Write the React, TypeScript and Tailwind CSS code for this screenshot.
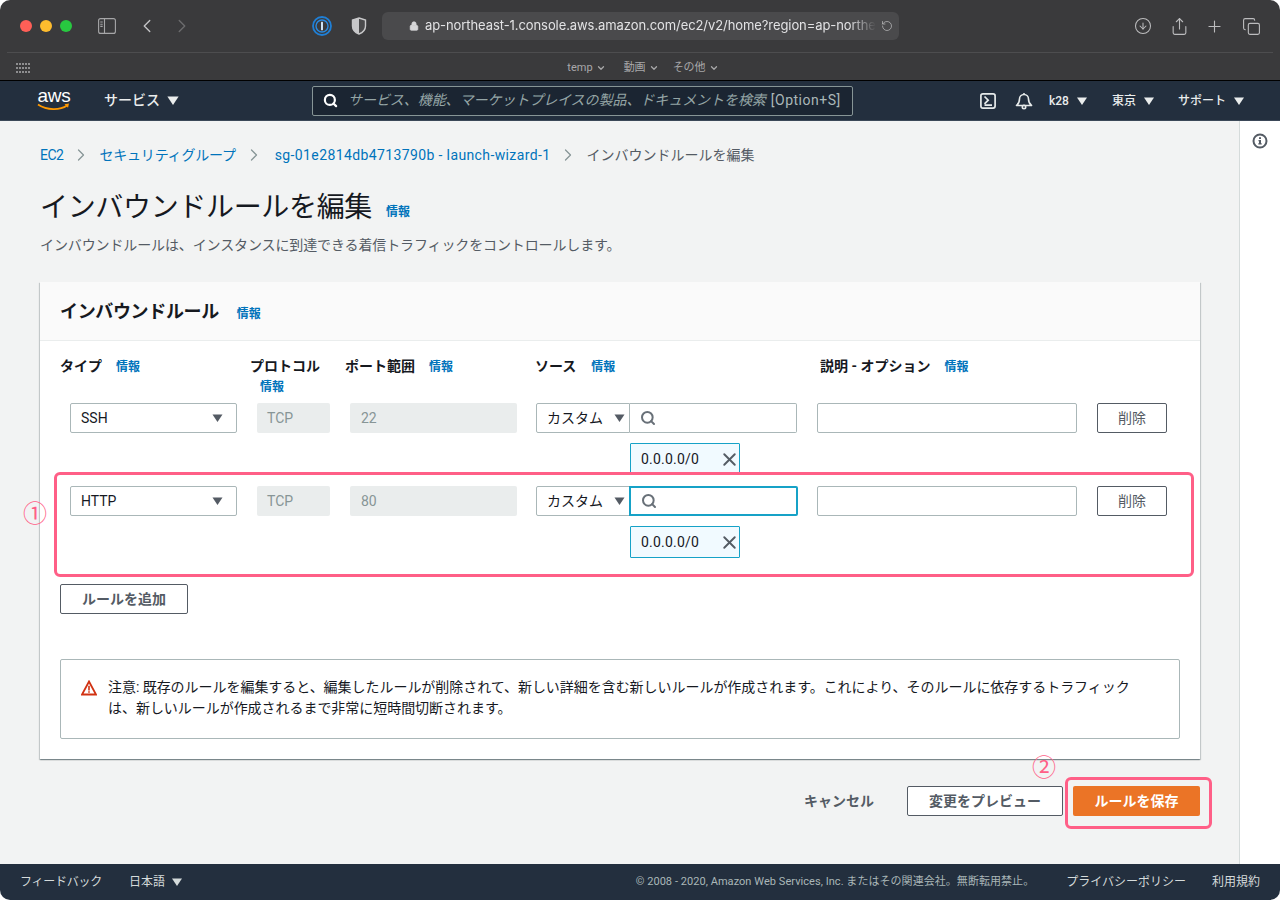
import React from 'react';
import { ArrowDownCircle, ChevronLeft, ChevronRight, ChevronDown, Copy, Lock, Plus, RotateCw, Search, Share, X } from 'lucide-react';

const jp = 'font-[Roboto,"Noto_Sans_CJK_JP",sans-serif]';

const Caret = ({ className = '' }: { className?: string }) => (
  <svg viewBox="0 0 10 8" className={`w-[10px] h-[8px] ${className}`} fill="currentColor">
    <path d="M0 0.5h10L5 8z" />
  </svg>
);

const InfoLink = ({ className = '' }: { className?: string }) => (
  <a className={`text-[12px] font-bold text-[#0073bb] leading-[18px] ${className}`}>情報</a>
);

const ThLabel = ({ children }: { children: React.ReactNode }) => (
  <span className="text-[14px] font-bold text-[#16191f] leading-[20px] whitespace-nowrap">{children}</span>
);

const Crumb = ({ children, className = '' }: { children: React.ReactNode; className?: string }) => (
  <a className={`text-[14px] text-[#0073bb] whitespace-nowrap ${className}`}>{children}</a>
);

const CrumbSep = () => <ChevronRight className="w-[20px] h-[20px] mx-[8px] text-[#879596]" strokeWidth={1.5} />;

const Rule = ({ type, port, focused }: { type: string; port: string; focused?: boolean }) => (
  <div className="flex items-start pl-[30px]">
    <div className="w-[167px] h-[30px] bg-white border border-[#aab7b8] rounded-[2px] flex items-center justify-between pl-[10px] pr-[13px]">
      <span className="text-[14px] text-[#16191f]">{type}</span>
      <Caret className="text-[#545b64] w-[11px]" />
    </div>
    <div className="w-[73px] h-[30px] ml-[20px] bg-[#eaeded] rounded-[2px] flex items-center pl-[10px] text-[14px] text-[#879596]">TCP</div>
    <div className="w-[167px] h-[30px] ml-[20px] bg-[#eaeded] rounded-[2px] flex items-center pl-[11px] text-[14px] text-[#879596]">{port}</div>
    <div className="w-[261px] ml-[19px]">
      <div className="flex h-[30px]">
        <div className="w-[94px] bg-white border border-[#aab7b8] rounded-l-[2px] flex items-center justify-between pl-[10px] pr-[4px]">
          <span className="text-[14px] text-[#16191f] whitespace-nowrap">カスタム</span>
          <Caret className="text-[#545b64] w-[11px]" />
        </div>
        <div className={`flex-1 bg-white rounded-r-[2px] flex items-center pl-[10px] ${focused ? 'border-2 border-[#16a2c7] -ml-px -mr-px' : 'border border-l-0 border-[#aab7b8]'}`}>
          <Search className="w-[16px] h-[16px] text-[#687078]" strokeWidth={3} />
        </div>
      </div>
      <div className="ml-[94px] mt-[10px] w-[110px] h-[32px] border border-[#16a2c7] rounded-[1px] bg-[#f1faff] flex items-center justify-between pl-[10px]">
        <span className="text-[14px] text-[#16191f] tracking-[0.2px]">0.0.0.0/0</span>
        <X className="w-[21px] h-[21px] text-[#545b64] -mr-[1px]" strokeWidth={2.2} />
      </div>
    </div>
    <div className="w-[260px] h-[30px] ml-[20px] bg-white border border-[#aab7b8] rounded-[2px]" />
    <button className="w-[70px] h-[30px] ml-[20px] bg-white border border-[#545b64] rounded-[2px] text-[14px] text-[#545b64]">削除</button>
  </div>
);

const App: React.FC = () => {
  return (
    <div className={`relative w-[1280px] h-[900px] overflow-hidden bg-white flex flex-col ${jp}`}>
      {/* Safari toolbar */}
      <div className="h-[81px] shrink-0 rounded-t-[10px] bg-[#3a3a3c] border-b border-black flex flex-col">
        <div className="h-[53px] mx-[7px] border-b border-[#4d4d4f] flex items-center pl-[13px] pr-[9px]">
          <span className="w-[12px] h-[12px] rounded-full bg-[#ff5f57]" />
          <span className="w-[12px] h-[12px] rounded-full bg-[#febc2e] ml-[8px]" />
          <span className="w-[12px] h-[12px] rounded-full bg-[#28c840] ml-[8px]" />
          <svg viewBox="0 0 18 16" className="w-[18px] h-[16px] ml-[26px] text-[#a6a6a8]" fill="none" stroke="currentColor" strokeWidth="1.1">
            <rect x="0.6" y="0.6" width="16.8" height="14.8" rx="2" />
            <path d="M6.5 0.6v14.8M2.3 4h2.4M2.3 6.2h2.4M2.3 8.4h2.4" />
          </svg>
          <ChevronLeft className="w-[22px] h-[22px] ml-[20px] text-[#c4c4c6]" strokeWidth={1.5} />
          <ChevronRight className="w-[22px] h-[22px] ml-[13px] text-[#6c6c6e]" strokeWidth={1.5} />
          <svg viewBox="0 0 20 20" className="w-[20px] h-[20px] ml-[119px]" fill="none">
            <circle cx="10" cy="10" r="9" stroke="#1f7fd6" strokeWidth="1.800" />
            <circle cx="10" cy="10" r="6" stroke="#2a8ae0" strokeWidth="1.400" />
            <rect x="9" y="5.800" width="2" height="8.400" rx="0.500" fill="#cfe3f5" />
          </svg>
          <svg viewBox="0 0 16 18" className="w-[16px] h-[18px] ml-[19px]">
            <path d="M8 1l6.500 2v6c0 4-3 6.700-6.500 8-3.500-1.300-6.500-4-6.500-8V3z" fill="#4a4a4c" stroke="#c8c8ca" strokeWidth="1.400" />
            <path d="M8 1l-6.500 2v6c0 4 3 6.700 6.500 8z" fill="#c8c8ca" />
          </svg>
          <div className="w-[517px] h-[28px] ml-[15px] rounded-[6px] bg-[#4a4a4c] flex items-center pl-[27px] pr-[6px] font-[Inter,sans-serif]">
            <Lock className="w-[10px] h-[10px] text-[#d6d6d8] fill-[#d6d6d8] shrink-0" strokeWidth={2} />
            <span className="ml-[6px] text-[13px] text-[#e2e2e4] whitespace-nowrap tracking-[-0.08px] [mask-image:linear-gradient(to_right,black_94%,transparent)]">ap-northeast-1.console.aws.amazon.com/ec2/v2/home?region=ap-northe</span>
            <RotateCw className="w-[12px] h-[12px] text-[#b8b8ba] ml-auto -scale-x-100" strokeWidth={1.5} />
          </div>
          <ArrowDownCircle className="w-[18px] h-[18px] ml-[235px] text-[#bcbcbe]" strokeWidth={1.4} />
          <Share className="w-[19px] h-[21px] ml-[18px] text-[#bcbcbe]" strokeWidth={1.4} />
          <Plus className="w-[19px] h-[19px] ml-[16px] text-[#bcbcbe]" strokeWidth={1.4} />
          <Copy className="w-[19px] h-[19px] ml-[18px] text-[#bcbcbe]" strokeWidth={1.4} />
        </div>
        <div className="flex-1 relative flex items-center justify-center text-[11px] text-[#a8a8aa] pt-[3px] pl-[6px]">
          <svg viewBox="0 0 14 10" className="absolute left-[16px] top-[10px] w-[14px] h-[10px] text-[#8e8e90]" fill="currentColor">
            <path d="M0 0h2v2H0zM3 0h2v2H3zM6 0h2v2H6zM9 0h2v2H9zM12 0h2v2h-2zM0 4h2v2H0zM3 4h2v2H3zM6 4h2v2H6zM9 4h2v2H9zM12 4h2v2h-2zM0 8h2v2H0zM3 8h2v2H3zM6 8h2v2H6zM9 8h2v2H9zM12 8h2v2h-2z" />
          </svg>
          <span className="flex items-center gap-[3px]">temp <ChevronDown className="w-[10px] h-[10px]" strokeWidth={3} /></span>
          <span className="flex items-center gap-[3px] ml-[18px]">動画 <ChevronDown className="w-[10px] h-[10px]" strokeWidth={3} /></span>
          <span className="flex items-center gap-[3px] ml-[14px]">その他 <ChevronDown className="w-[10px] h-[10px]" strokeWidth={3} /></span>
        </div>
      </div>

      {/* AWS nav */}
      <div className="h-[40px] shrink-0 bg-[#232f3e] flex items-center text-white border-b border-[#3b4858]">
        <div className="ml-[37px] w-[34px] h-[30px] relative flex flex-col items-center">
          <span className="text-[19px] leading-[17px] font-[Liberation_Sans,sans-serif] mt-[1px] tracking-[-0.2px]">aws</span>
          <svg viewBox="0 0 34 9" className="w-[34px] h-[9px] -mt-[1px]">
            <path d="M1 1.500c9 6 22 6 29 1" fill="none" stroke="#f90" strokeWidth="1.800" />
            <path d="M27.500 1.200l4.500-.6-1 4.200z" fill="#f90" />
          </svg>
        </div>
        <span className="ml-[33px] text-[14px] font-medium text-[#eaeded]">サービス</span>
        <Caret className="ml-[7px] w-[12px] h-[9px] text-[#eaeded]" />
        <div className="ml-[133px] w-[541px] h-[30px] border border-[#879596] rounded-[2px] bg-[#1b2532] flex items-center pl-[10px] whitespace-nowrap">
          <Search className="w-[15px] h-[15px] text-white" strokeWidth={3.5} />
          <span className="ml-[10px] text-[14px] italic text-[#95a5a6] tracking-[-0.06px]">サービス、機能、マーケットプレイスの製品、ドキュメントを検索</span>
          <span className="ml-[5px] text-[14px] text-[#aab7b8] tracking-[0.5px]">[Option+S]</span>
        </div>
        <svg viewBox="0 0 16 16" className="ml-[127px] w-[16px] h-[16px]" fill="none" stroke="#e6eaea" strokeWidth="1.700">
          <rect x="0.900" y="0.900" width="14.200" height="14.200" rx="2" />
          <path d="M4.500 3.500l3.700 3.700-3.700 3.700M4.500 12.200h7.500" />
        </svg>
        <svg viewBox="0 0 18 18" className="ml-[19px] w-[18px] h-[18px]" fill="none" stroke="#e6eaea" strokeWidth="1.600">
          <path d="M1.500 13.500c2-1.500 3-3.500 3-6.500a4.500 4.500 0 019 0c0 3 1 5 3 6.500zM9 1v1.500" strokeLinejoin="round" />
          <circle cx="9" cy="15" r="1.700" />
        </svg>
        <span className="ml-[16px] text-[12px] font-medium text-[#eaeded]">k28</span>
        <Caret className="ml-[8px] w-[10px] h-[8px] text-[#eaeded]" />
        <span className="ml-[25px] text-[12px] font-medium text-[#eaeded]">東京</span>
        <Caret className="ml-[8px] w-[10px] h-[8px] text-[#eaeded]" />
        <span className="ml-[24px] text-[12px] font-medium text-[#eaeded]">サポート</span>
        <Caret className="ml-[8px] w-[10px] h-[8px] text-[#eaeded]" />
      </div>

      {/* Main */}
      <div className="flex-1 flex min-h-0">
        <div className="flex-1 bg-[#f2f3f3] pl-[40px] pr-[39px] pt-[24px]">
          <div className="flex items-center h-[20px]">
            <Crumb className="tracking-[-0.5px]">EC2</Crumb>
            <CrumbSep />
            <Crumb className="tracking-[-0.2px]">セキュリティグループ</Crumb>
            <CrumbSep />
            <Crumb className="ml-[3px] tracking-[0.38px]">sg-01e2814db4713790b - launch-wizard-1</Crumb>
            <CrumbSep />
            <span className="text-[14px] text-[#545b64] whitespace-nowrap">インバウンドルールを編集</span>
          </div>
          <div className="mt-[23px] flex items-center h-[40px]">
            <h1 className="text-[28px] text-[#16191f] leading-[40px] font-normal whitespace-nowrap tracking-[-0.33px]">インバウンドルールを編集</h1>
            <InfoLink className="ml-[14px] mt-[7px]" />
          </div>
          <p className="mt-[7px] text-[14px] text-[#545b64] leading-[20px] tracking-[-0.12px]">インバウンドルールは、インスタンスに到達できる着信トラフィックをコントロールします。</p>

          <div className="mt-[27px] h-[477px] bg-white shadow-[0_1px_1px_0_rgba(0,28,36,0.3),1px_1px_1px_0_rgba(0,28,36,0.15),-1px_1px_1px_0_rgba(0,28,36,0.15)]">
            <div className="h-[59px] bg-[#fafafa] border-b border-[#eaeded] flex items-center pl-[20px]">
              <h2 className="text-[18px] font-bold text-[#16191f] tracking-[-0.35px]">インバウンドルール</h2>
              <InfoLink className="ml-[18px] mt-[5px]" />
            </div>
            <div className="h-[62px] pt-[15px] flex items-start pl-[20px] leading-[20px]">
              <div className="w-[190px]"><ThLabel>タイプ</ThLabel><InfoLink className="ml-[14px]" /></div>
              <div className="w-[95px] flex flex-col items-start"><ThLabel>プロトコル</ThLabel><InfoLink className="ml-[10px] mt-[2px]" /></div>
              <div className="w-[190px]"><ThLabel>ポート範囲</ThLabel><InfoLink className="ml-[14px]" /></div>
              <div className="w-[285px]"><ThLabel>ソース</ThLabel><InfoLink className="ml-[15px]" /></div>
              <div><ThLabel>説明 - オプション</ThLabel><InfoLink className="ml-[14px]" /></div>
            </div>
            <Rule type="SSH" port="22" />
            <div className="mt-[11px]"><Rule type="HTTP" port="80" focused /></div>
            <button className="ml-[20px] mt-[26px] w-[128px] h-[30px] bg-white border border-[#545b64] rounded-[2px] text-[14px] font-bold text-[#545b64]">ルールを追加</button>
            <div className="mx-[20px] mt-[45px] h-[80px] border border-[#aab7b8] rounded-[2px] flex items-start pl-[20px] pt-[17px]">
              <svg viewBox="0 0 16 16" className="w-[16px] h-[16px] mt-[3px] shrink-0">
                <path d="M8 1.500L15 14.500H1z" fill="none" stroke="#d13212" strokeWidth="1.800" strokeLinejoin="miter" />
                <path d="M7.200 5.800h1.600v4.600H7.200zM7.200 11.200h1.600v1.600H7.200z" fill="#d13212" />
              </svg>
              <p className="ml-[11px] w-[1040px] text-[14px] leading-[21px] text-[#16191f] tracking-[-0.04px]">注意: 既存のルールを編集すると、編集したルールが削除されて、新しい詳細を含む新しいルールが作成されます。これにより、そのルールに依存するトラフィックは、新しいルールが作成されるまで非常に短時間切断されます。</p>
            </div>
          </div>

          <div className="mt-[27px] flex items-center justify-end h-[30px]">
            <span className="text-[14px] font-bold text-[#545b64]">キャンセル</span>
            <button className="ml-[33px] w-[156px] h-[30px] bg-white border border-[#545b64] rounded-[2px] text-[14px] font-bold text-[#545b64]">変更をプレビュー</button>
            <button className="ml-[10px] w-[127px] h-[30px] bg-[#eb7426] rounded-[2px] text-[14px] font-bold text-white">ルールを保存</button>
          </div>
        </div>
        <div className="w-[41px] shrink-0 bg-white border-l border-[#d5dbdb] flex justify-center pt-[12px]">
          <svg viewBox="0 0 16 16" className="w-[16px] h-[16px]" fill="none">
            <circle cx="8" cy="8" r="6.500" stroke="#545b64" strokeWidth="2" />
            <path d="M7 4.200h2v1.800H7zM6.500 7h2.500v3.200h.7v1.300H6.300v-1.300H7V8.200h-.5z" fill="#545b64" />
          </svg>
        </div>
      </div>

      {/* Footer */}
      <div className="h-[36px] shrink-0 bg-[#232f3e] rounded-b-[10px] flex items-center pl-[20px] pr-[20px] text-[12px] text-[#d5dbdb] whitespace-nowrap">
        <span className="tracking-[-0.25px]">フィードバック</span>
        <span className="ml-[27px]">日本語</span>
        <Caret className="ml-[7px] text-[#d5dbdb]" />
        <span className="ml-auto text-[11px] text-[#aab7b8] tracking-[0.05px]">© 2008 - 2020, Amazon Web Services, Inc. またはその関連会社。無断転用禁止。</span>
        <span className="ml-[32px]">プライバシーポリシー</span>
        <span className="ml-[26px]">利用規約</span>
      </div>

      {/* screenshot annotations */}
      <div className="absolute left-[54px] top-[472px] w-[1140px] h-[105px] border-[3px] border-[#ff5f87] rounded-[6px]" />
      <div className="absolute left-[1065px] top-[777px] w-[147px] h-[52px] border-[3px] border-[#ff5f87] rounded-[6px]" />
      <span className="absolute left-[23px] top-[499px] text-[24px] leading-[30px] text-[#ff5f87]">①</span>
      <span className="absolute left-[1032px] top-[753px] text-[24px] leading-[30px] text-[#ff5f87]">②</span>
    </div>
  );
};

export default App;
